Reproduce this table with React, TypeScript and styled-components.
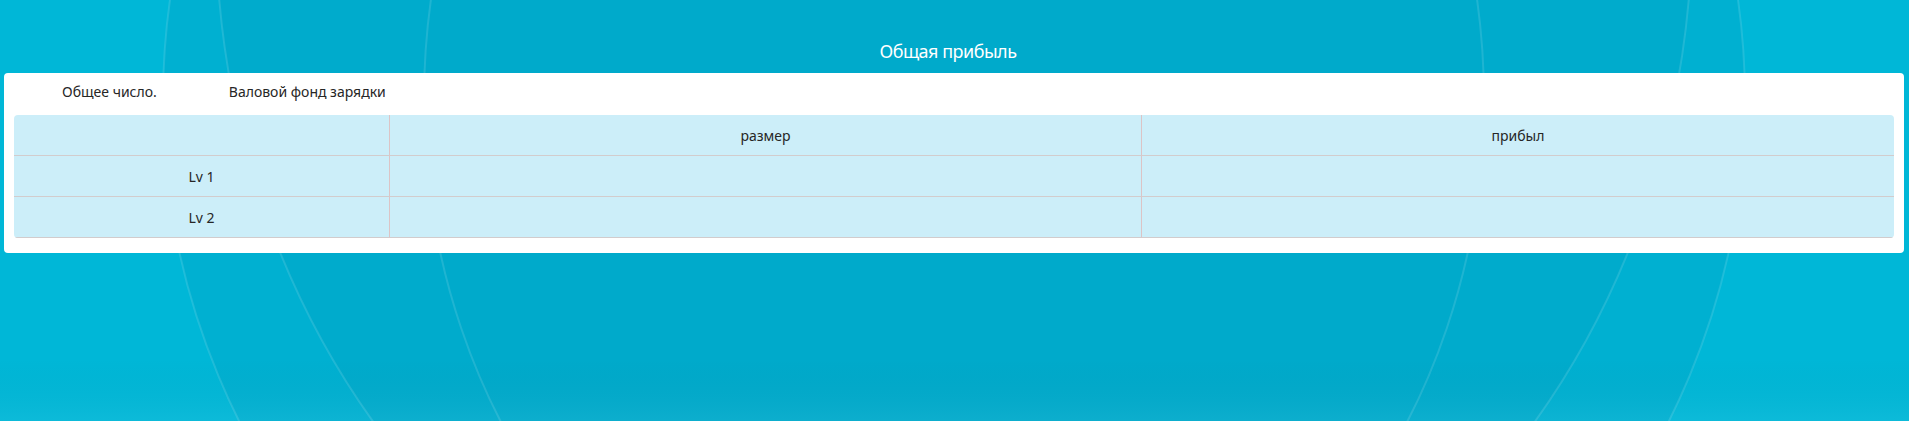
import React from "react";
import styled, { createGlobalStyle } from "styled-components";

const GlobalStyle = createGlobalStyle`
  html, body { margin: 0; padding: 0; }
  body {
    font-family: "Noto Sans", "Open Sans", sans-serif;
    color: #262626;
  }
`;

const Page = styled.div`
  position: relative;
  width: 1909px;
  height: 421px;
  overflow: hidden;
  background: #00b7d7;
`;

const Decor = styled.svg`
  position: absolute;
  inset: 0;
  width: 100%;
  height: 100%;
  pointer-events: none;
`;

const Content = styled.div`
  position: relative;
  display: flex;
  flex-direction: column;
  padding: 0 5px 0 4px;
`;

const Title = styled.h2`
  margin: 0;
  height: 73px;
  display: flex;
  align-items: flex-end;
  justify-content: center;
  padding: 0 12px 10px 0;
  box-sizing: border-box;
  font-size: 18px;
  font-weight: 400;
  letter-spacing: -0.5px;
  color: #ffffff;
`;

const Card = styled.div`
  background: #ffffff;
  border-radius: 4px;
  padding: 0 10px 15px;
`;

const Summary = styled.div`
  display: flex;
  align-items: center;
  gap: 72px;
  height: 36px;
  padding-left: 48px;
  margin-bottom: 6px;
  font-size: 14px;
`;

const SummaryItem = styled.span`
  white-space: nowrap;
`;

const Table = styled.div`
  display: grid;
  grid-template-columns: 20% 40% 40%;
  background: #cceef9;
  border-radius: 4px;
  overflow: hidden;
  font-size: 14px;
`;

const Cell = styled.div<{ $last?: boolean }>`
  height: 40px;
  display: flex;
  align-items: center;
  justify-content: center;
  border-bottom: 1px solid #d2cccd;
  border-right: ${(p) => (p.$last ? "none" : "1px solid #dcc4c6")};
`;

const rows = [
  ["", "размер", "прибыл"],
  ["Lv 1", "", ""],
  ["Lv 2", "", ""],
];

export default function App() {
  return (
    <>
      <GlobalStyle />
      <Page>
        <Decor viewBox="0 0 1909 421">
          <defs>
            <linearGradient id="fade" x1="0" y1="0" x2="0" y2="1">
              <stop offset="0" stopColor="#000" stopOpacity="0" />
              <stop offset="0.85" stopColor="#000" stopOpacity="0" />
              <stop offset="1" stopColor="#fff" stopOpacity="0.05" />
            </linearGradient>
          </defs>
          <ellipse cx="954" cy="100" rx="791" ry="750" fill="#00b0d1" />
          <ellipse cx="954" cy="-77" rx="738" ry="808" fill="#00abcc" />
          <ellipse cx="954" cy="100" rx="530" ry="620" fill="#00aacb" />
          <g fill="none" stroke="rgba(255,255,255,0.12)" strokeWidth="2">
            <ellipse cx="954" cy="100" rx="791" ry="750" />
            <ellipse cx="954" cy="-77" rx="738" ry="808" />
            <ellipse cx="954" cy="100" rx="530" ry="620" />
          </g>
          <rect x="0" y="0" width="1909" height="421" fill="url(#fade)" />
        </Decor>
        <Content>
          <Title>Общая прибыль</Title>
          <Card>
            <Summary>
              <SummaryItem>Общее число.</SummaryItem>
              <SummaryItem>Валовой фонд зарядки</SummaryItem>
            </Summary>
            <Table>
              {rows.map((r, i) =>
                r.map((c, j) => (
                  <Cell key={`${i}-${j}`} $last={j === 2}>
                    {c}
                  </Cell>
                ))
              )}
            </Table>
          </Card>
        </Content>
      </Page>
    </>
  );
}
